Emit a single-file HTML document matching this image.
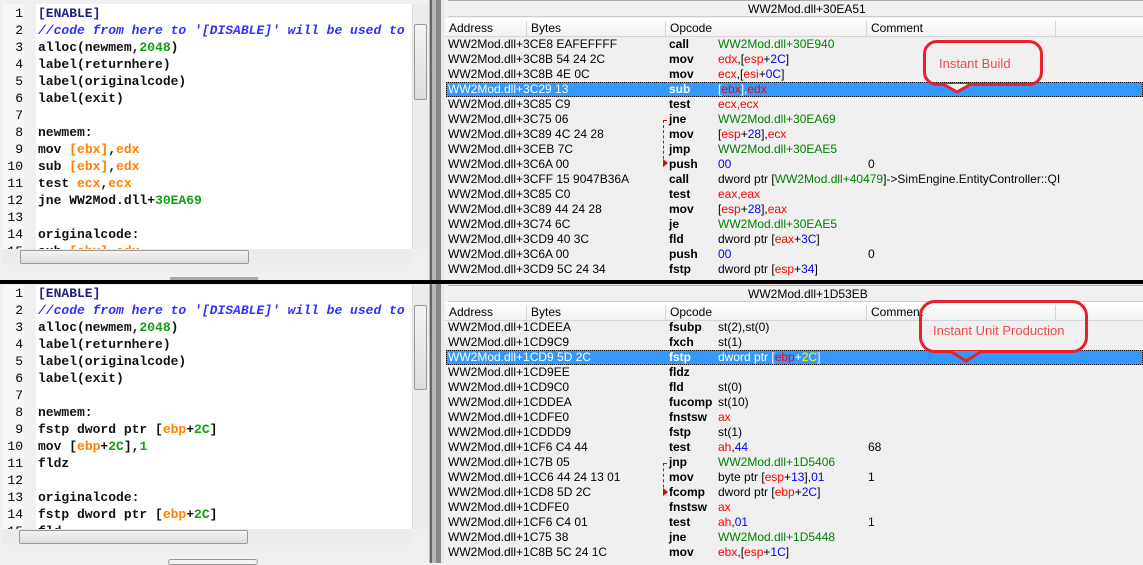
<!DOCTYPE html>
<html><head><meta charset="utf-8"><style>
*{margin:0;padding:0;box-sizing:border-box}
body{width:1143px;height:563px;overflow:hidden;background:#f0f0f0;position:relative;font-family:"Liberation Sans",sans-serif}
.abs{position:absolute}
.code{position:absolute;left:2px;width:410px;background:#fff;overflow:hidden;font-family:"Liberation Mono","Courier New",monospace;font-size:13px;color:#111;font-weight:bold}
.gut{position:absolute;left:0;top:0;width:22px;height:100%;background:#f7f7f7}
.gut2{position:absolute;left:22px;top:0;width:12px;height:100%;background:#f0f0f0}
.ln{position:absolute;left:0;width:21px;text-align:right;font-weight:normal;line-height:17px;color:#000}
.cl{position:absolute;left:36px;line-height:17px;white-space:pre}
.cm{color:#3030ff;font-style:italic}
.nb{color:#10a010}
.rg{color:#ff8000}
.vs{position:absolute;left:412px;width:16px;background:#ececec;border-left:1px solid #ddd}
.hs{position:absolute;left:2px;width:410px;height:16px;background:#ececec}
.thumb{position:absolute;background:linear-gradient(#f4f4f4,#dcdcdc);border:1px solid #999;border-radius:2px}
.title{position:absolute;left:448px;width:695px;height:17px;background:#f0f0f0;border-bottom:1px solid #ccc;border-top:1px solid #aaa}
.title span{position:absolute;left:300px;top:1px;font-size:12px}
.hdr{position:absolute;left:445px;width:698px;height:19px;background:linear-gradient(#fff,#f2f2f2);border-bottom:1px solid #d5d5d5}
.hdr span{position:absolute;top:3px;font-size:12px;padding-left:4px;border-left:1px solid #d5d5d5;height:16px}
.row{position:absolute;left:446px;width:697px;height:15px;line-height:15px;font-size:12px;white-space:pre}
.row span{position:absolute;top:0}
.a{left:2px}.o{left:223px;font-weight:bold}.p{left:272px}.c{left:422px}
.sel{background:#3399ff;color:#fff;outline:1px dotted #000;outline-offset:-1px}
.r{color:#ff0000}.bl{color:#0000ff}.g{color:#008000}.y{color:#ffff00}
i{font-style:normal}
.bub{position:absolute;border:3px solid #e8202a;border-radius:14px;color:#e84c4c;font-size:13px}
</style></head><body>

<div class="code" style="top:4px;height:245px">
<div class="gut"></div><div class="gut2"></div>
<div class="ln" style="top:1px">1</div><div class="ln" style="top:18px">2</div><div class="ln" style="top:35px">3</div><div class="ln" style="top:52px">4</div><div class="ln" style="top:69px">5</div><div class="ln" style="top:86px">6</div><div class="ln" style="top:103px">7</div><div class="ln" style="top:120px">8</div><div class="ln" style="top:137px">9</div><div class="ln" style="top:154px">10</div><div class="ln" style="top:171px">11</div><div class="ln" style="top:188px">12</div><div class="ln" style="top:205px">13</div><div class="ln" style="top:222px">14</div><div class="ln" style="top:239px">15</div>
<div class="cl" style="top:1px;color:#202080">[ENABLE]</div>
<div class="cl cm" style="top:18px">//code from here to '[DISABLE]' will be used to enable</div>
<div class="cl" style="top:35px">alloc(newmem,<span class="nb">2048</span>)</div>
<div class="cl" style="top:52px">label(returnhere)</div>
<div class="cl" style="top:69px">label(originalcode)</div>
<div class="cl" style="top:86px">label(exit)</div>
<div class="cl" style="top:120px">newmem:</div>
<div class="cl" style="top:137px">mov <span class="rg">[ebx]</span>,<span class="rg">edx</span></div>
<div class="cl" style="top:154px">sub <span class="rg">[ebx]</span>,<span class="rg">edx</span></div>
<div class="cl" style="top:171px">test <span class="rg">ecx</span>,<span class="rg">ecx</span></div>
<div class="cl" style="top:188px">jne WW2Mod.dll+<span class="nb">30EA69</span></div>
<div class="cl" style="top:222px">originalcode:</div>
<div class="cl" style="top:239px">sub <span class="rg">[ebx]</span>,<span class="rg">edx</span></div>
</div>
<div class="vs" style="top:4px;height:245px"><div class="thumb" style="left:1px;top:20px;width:13px;height:76px"></div></div>
<div class="hs" style="top:249px"><div class="thumb" style="left:18px;top:1px;width:229px;height:14px"></div></div>
<div class="abs" style="left:170px;top:277px;width:88px;height:3px;background:#aaa"></div>

<div class="code" style="top:285px;height:244px">
<div class="gut"></div><div class="gut2"></div>
<div class="ln" style="top:0px">1</div><div class="ln" style="top:17px">2</div><div class="ln" style="top:34px">3</div><div class="ln" style="top:51px">4</div><div class="ln" style="top:68px">5</div><div class="ln" style="top:85px">6</div><div class="ln" style="top:102px">7</div><div class="ln" style="top:119px">8</div><div class="ln" style="top:136px">9</div><div class="ln" style="top:153px">10</div><div class="ln" style="top:170px">11</div><div class="ln" style="top:187px">12</div><div class="ln" style="top:204px">13</div><div class="ln" style="top:221px">14</div><div class="ln" style="top:238px">15</div>
<div class="cl" style="top:0px;color:#202080">[ENABLE]</div>
<div class="cl cm" style="top:17px">//code from here to '[DISABLE]' will be used to enable</div>
<div class="cl" style="top:34px">alloc(newmem,<span class="nb">2048</span>)</div>
<div class="cl" style="top:51px">label(returnhere)</div>
<div class="cl" style="top:68px">label(originalcode)</div>
<div class="cl" style="top:85px">label(exit)</div>
<div class="cl" style="top:119px">newmem:</div>
<div class="cl" style="top:136px">fstp dword ptr [<span class="rg">ebp</span>+<span class="nb">2C</span>]</div>
<div class="cl" style="top:153px">mov [<span class="rg">ebp</span>+<span class="nb">2C</span>],<span class="nb">1</span></div>
<div class="cl" style="top:170px">fldz</div>
<div class="cl" style="top:204px">originalcode:</div>
<div class="cl" style="top:221px">fstp dword ptr [<span class="rg">ebp</span>+<span class="nb">2C</span>]</div>
<div class="cl" style="top:238px">fld</div>
</div>
<div class="vs" style="top:285px;height:244px"><div class="thumb" style="left:1px;top:20px;width:13px;height:85px"></div></div>
<div class="hs" style="top:529px"><div class="thumb" style="left:17px;top:1px;width:229px;height:14px"></div></div>
<div class="abs" style="left:168px;top:559px;width:90px;height:6px;border:1px solid #999;border-radius:3px;background:#f4f4f4"></div>

<div class="abs" style="left:429px;top:0;width:15px;height:563px;background:#b8b8b8"></div>
<div class="abs" style="left:430px;top:0;width:2px;height:563px;background:#666"></div>
<div class="abs" style="left:436px;top:0;width:5px;height:563px;background:#888"></div>
<div class="abs" style="left:441px;top:0;width:3px;height:563px;background:#e8e8e8"></div>

<div class="title" style="top:0"><span>WW2Mod.dll+30EA51</span></div>
<div class="hdr" style="top:18px"><span style="left:0;border:none">Address</span><span style="left:81px">Bytes</span><span style="left:220px">Opcode</span><span style="left:421px">Comment</span><span style="left:610px;width:90px"></span></div>
<div class="title" style="top:285px"><span>WW2Mod.dll+1D53EB</span></div>
<div class="hdr" style="top:302px"><span style="left:0;border:none">Address</span><span style="left:81px">Bytes</span><span style="left:220px">Opcode</span><span style="left:421px">Comment</span><span style="left:610px;width:90px"></span></div>

<div class="row" style="top:37px"><span class="a">WW2Mod.dll+3CE8 EAFEFFFF</span><span class="o">call</span><span class="p g">WW2Mod.dll+30E940</span></div>
<div class="row" style="top:52px"><span class="a">WW2Mod.dll+3C8B 54 24 2C</span><span class="o">mov</span><span class="p"><i class="r">edx</i>,[<i class="r">esp</i>+<i class="bl">2C</i>]</span></div>
<div class="row" style="top:67px"><span class="a">WW2Mod.dll+3C8B 4E 0C</span><span class="o">mov</span><span class="p"><i class="r">ecx</i>,[<i class="r">esi</i>+<i class="bl">0C</i>]</span></div>
<div class="row sel" style="top:82px"><span class="a">WW2Mod.dll+3C29 13</span><span class="o">sub</span><span class="p">[<i class="r">ebx</i>],<i class="r">edx</i></span></div>
<div class="row" style="top:97px"><span class="a">WW2Mod.dll+3C85 C9</span><span class="o">test</span><span class="p r">ecx,ecx</span></div>
<div class="row" style="top:112px"><span class="a">WW2Mod.dll+3C75 06</span><span class="o">jne</span><span class="p g">WW2Mod.dll+30EA69</span></div>
<div class="row" style="top:127px"><span class="a">WW2Mod.dll+3C89 4C 24 28</span><span class="o">mov</span><span class="p">[<i class="r">esp</i>+<i class="bl">28</i>],<i class="r">ecx</i></span></div>
<div class="row" style="top:142px"><span class="a">WW2Mod.dll+3CEB 7C</span><span class="o">jmp</span><span class="p g">WW2Mod.dll+30EAE5</span></div>
<div class="row" style="top:157px"><span class="a">WW2Mod.dll+3C6A 00</span><span class="o">push</span><span class="p bl">00</span><span class="c">0</span></div>
<div class="row" style="top:172px"><span class="a">WW2Mod.dll+3CFF 15 9047B36A</span><span class="o">call</span><span class="p">dword ptr [<i class="g">WW2Mod.dll+40479</i>]-&gt;SimEngine.EntityController::QI</span></div>
<div class="row" style="top:187px"><span class="a">WW2Mod.dll+3C85 C0</span><span class="o">test</span><span class="p r">eax,eax</span></div>
<div class="row" style="top:202px"><span class="a">WW2Mod.dll+3C89 44 24 28</span><span class="o">mov</span><span class="p">[<i class="r">esp</i>+<i class="bl">28</i>],<i class="r">eax</i></span></div>
<div class="row" style="top:217px"><span class="a">WW2Mod.dll+3C74 6C</span><span class="o">je</span><span class="p g">WW2Mod.dll+30EAE5</span></div>
<div class="row" style="top:232px"><span class="a">WW2Mod.dll+3CD9 40 3C</span><span class="o">fld</span><span class="p">dword ptr [<i class="r">eax</i>+<i class="bl">3C</i>]</span></div>
<div class="row" style="top:247px"><span class="a">WW2Mod.dll+3C6A 00</span><span class="o">push</span><span class="p bl">00</span><span class="c">0</span></div>
<div class="row" style="top:262px"><span class="a">WW2Mod.dll+3CD9 5C 24 34</span><span class="o">fstp</span><span class="p">dword ptr [<i class="r">esp</i>+<i class="bl">34</i>]</span></div>

<div class="row" style="top:320px"><span class="a">WW2Mod.dll+1CDEEA</span><span class="o">fsubp</span><span class="p">st(2),st(0)</span></div>
<div class="row" style="top:335px"><span class="a">WW2Mod.dll+1CD9C9</span><span class="o">fxch</span><span class="p">st(1)</span></div>
<div class="row sel" style="top:350px"><span class="a">WW2Mod.dll+1CD9 5D 2C</span><span class="o">fstp</span><span class="p">dword ptr [<i class="r">ebp</i>+<i class="y">2C</i>]</span></div>
<div class="row" style="top:365px"><span class="a">WW2Mod.dll+1CD9EE</span><span class="o">fldz</span></div>
<div class="row" style="top:380px"><span class="a">WW2Mod.dll+1CD9C0</span><span class="o">fld</span><span class="p">st(0)</span></div>
<div class="row" style="top:395px"><span class="a">WW2Mod.dll+1CDDEA</span><span class="o">fucomp</span><span class="p">st(10)</span></div>
<div class="row" style="top:410px"><span class="a">WW2Mod.dll+1CDFE0</span><span class="o">fnstsw</span><span class="p r">ax</span></div>
<div class="row" style="top:425px"><span class="a">WW2Mod.dll+1CDDD9</span><span class="o">fstp</span><span class="p">st(1)</span></div>
<div class="row" style="top:440px"><span class="a">WW2Mod.dll+1CF6 C4 44</span><span class="o">test</span><span class="p"><i class="r">ah</i>,<i class="bl">44</i></span><span class="c">68</span></div>
<div class="row" style="top:455px"><span class="a">WW2Mod.dll+1C7B 05</span><span class="o">jnp</span><span class="p g">WW2Mod.dll+1D5406</span></div>
<div class="row" style="top:470px"><span class="a">WW2Mod.dll+1CC6 44 24 13 01</span><span class="o">mov</span><span class="p">byte ptr [<i class="r">esp</i>+<i class="bl">13</i>],<i class="bl">01</i></span><span class="c">1</span></div>
<div class="row" style="top:485px"><span class="a">WW2Mod.dll+1CD8 5D 2C</span><span class="o">fcomp</span><span class="p">dword ptr [<i class="r">ebp</i>+<i class="bl">2C</i>]</span></div>
<div class="row" style="top:500px"><span class="a">WW2Mod.dll+1CDFE0</span><span class="o">fnstsw</span><span class="p r">ax</span></div>
<div class="row" style="top:515px"><span class="a">WW2Mod.dll+1CF6 C4 01</span><span class="o">test</span><span class="p"><i class="r">ah</i>,<i class="bl">01</i></span><span class="c">1</span></div>
<div class="row" style="top:530px"><span class="a">WW2Mod.dll+1C75 38</span><span class="o">jne</span><span class="p g">WW2Mod.dll+1D5448</span></div>
<div class="row" style="top:545px"><span class="a">WW2Mod.dll+1C8B 5C 24 1C</span><span class="o">mov</span><span class="p"><i class="r">ebx</i>,[<i class="r">esp</i>+<i class="bl">1C</i>]</span></div>

<div class="abs" style="left:663px;top:120px;width:4px;height:44px;border-left:1px dashed #e00;border-top:1px dashed #e00"></div>
<div class="abs" style="left:663px;top:159px;width:0;height:0;border-left:5px solid #e00;border-top:4px solid transparent;border-bottom:4px solid transparent"></div>
<div class="abs" style="left:663px;top:463px;width:4px;height:30px;border-left:1px dashed #e00;border-top:1px dashed #e00"></div>
<div class="abs" style="left:663px;top:488px;width:0;height:0;border-left:5px solid #e00;border-top:4px solid transparent;border-bottom:4px solid transparent"></div>

<div class="abs" style="left:0;top:280px;width:1143px;height:4px;background:#000"></div>

<div class="bub" style="left:923px;top:40px;width:120px;height:46px"><span style="position:absolute;left:13px;top:13px">Instant Build</span></div>
<svg class="abs" style="left:940px;top:82px" width="40" height="14"><path d="M3 2 L17 10 L31 2" fill="#f0f0f0" stroke="#e8202a" stroke-width="3"/></svg>
<div class="bub" style="left:919px;top:300px;width:169px;height:53px;border-radius:16px"><span style="position:absolute;left:11px;top:20px">Instant Unit Production</span></div>
<svg class="abs" style="left:947px;top:349px" width="40" height="16"><path d="M3 2 L19 12 L35 2" fill="#3399ff" stroke="#e8202a" stroke-width="3"/></svg>
</body></html>
